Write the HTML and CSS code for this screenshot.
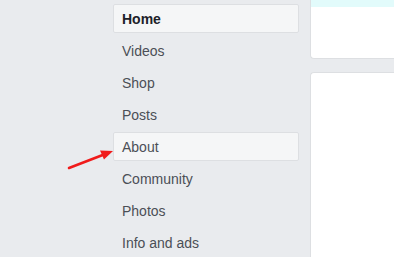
FILE: index.html
```html
<!DOCTYPE html>
<html>
<head>
<meta charset="utf-8">
<link rel="stylesheet" href="styles.css">
</head>
<body>
<div class="page">
  <nav class="nav">
    <a class="item active">Home</a>
    <a class="item">Videos</a>
    <a class="item">Shop</a>
    <a class="item">Posts</a>
    <a class="item boxed">About</a>
    <a class="item">Community</a>
    <a class="item">Photos</a>
    <a class="item">Info and ads</a>
  </nav>
  <main class="main">
    <div class="card card-top"><div class="strip"></div></div>
    <div class="card card-body"></div>
  </main>
</div>
<svg class="arrow" width="60" height="30" viewBox="64 144 60 30">
  <line x1="69" y1="168" x2="104" y2="154.5" stroke="#f01b1b" stroke-width="2.6" stroke-linecap="round"/>
  <polygon points="113,151 100,150.5 104,159.5" fill="#f01b1b"/>
</svg>
</body>
</html>
```
FILE: styles.css
```css
html, body {
  margin: 0;
  padding: 0;
  background: #e9ebee;
  overflow: hidden;
  width: 394px;
  height: 257px;
}
.page {
  display: flex;
  gap: 11px;
  padding-left: 113px;
  height: 257px;
  box-sizing: border-box;
  font-family: "Liberation Sans", Arial, sans-serif;
  font-size: 14px;
  color: #4b4f56;
}
.nav {
  width: 186px;
  flex: none;
  display: flex;
  flex-direction: column;
  padding-top: 4px;
  overflow: hidden;
}
.item {
  flex: none;
  display: flex;
  align-items: center;
  height: 29px;
  margin-bottom: 3px;
  padding-left: 8px;
  box-sizing: border-box;
  border: 1px solid transparent;
  border-radius: 2px;
  cursor: pointer;
}
.item.active {
  font-weight: bold;
  color: #1d2129;
  background: #f5f6f7;
  border-color: #dddfe2;
}
.item.boxed {
  background: #f5f6f7;
  border-color: #dddfe2;
}
.main {
  flex: 1;
  display: flex;
  flex-direction: column;
  gap: 13px;
}
.card {
  background: #fff;
  border: 1px solid #dddfe2;
  border-right: none;
  box-sizing: border-box;
}
.card-top {
  flex: none;
  height: 59px;
  border-top: none;
  border-bottom-left-radius: 4px;
}
.strip {
  height: 7px;
  background: #e2fbfb;
}
.card-body {
  flex: 1;
  border-bottom: none;
  border-top-left-radius: 4px;
}
.arrow {
  position: absolute;
  left: 64px;
  top: 144px;
}
```
